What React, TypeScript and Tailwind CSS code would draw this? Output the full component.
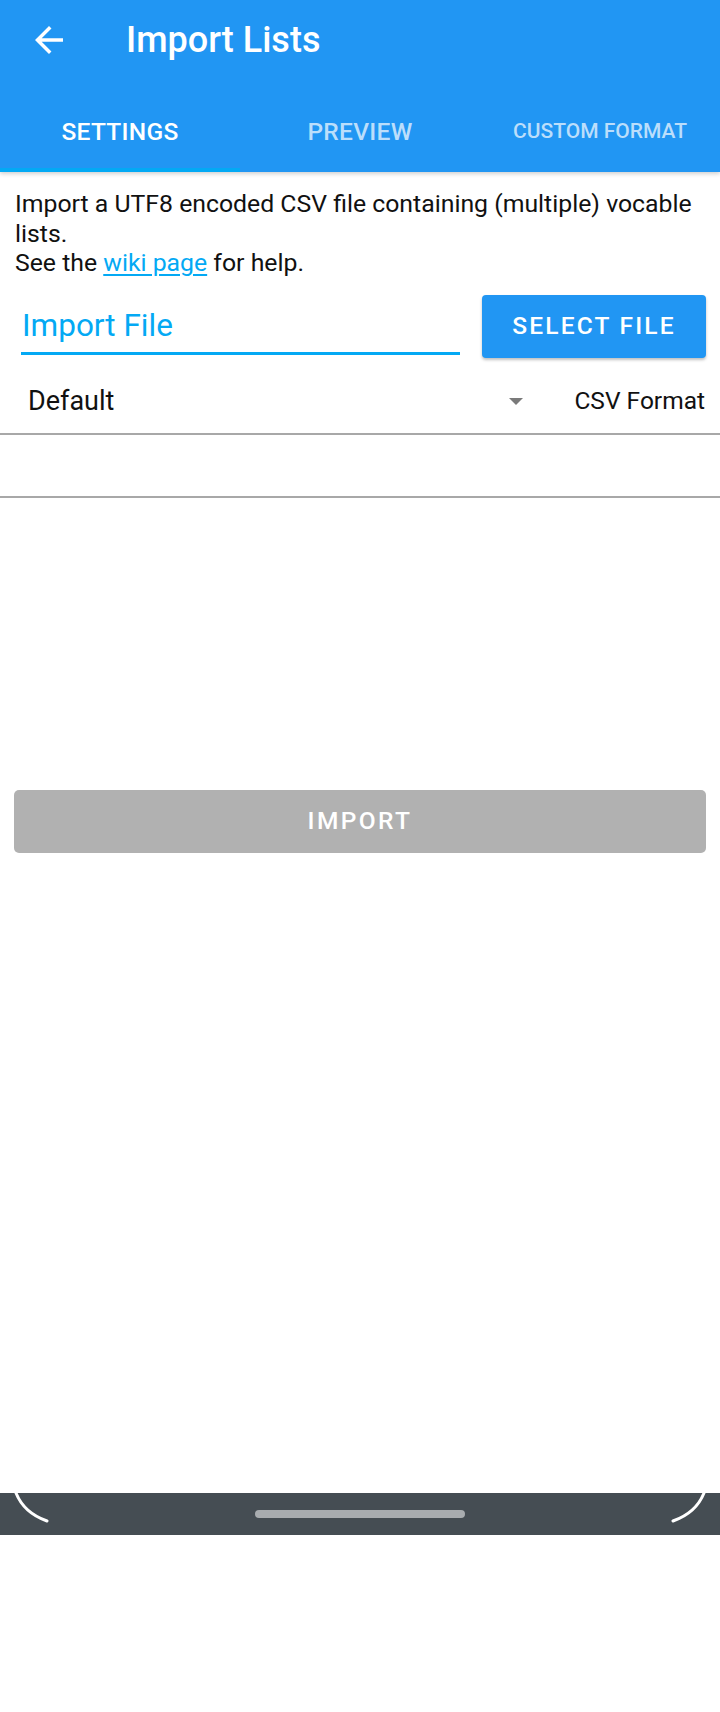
import { useState } from 'react'

const tabs = ['SETTINGS', 'PREVIEW', 'CUSTOM FORMAT']

function BackArrow() {
  return (
    <svg width="42" height="42" viewBox="0 0 24 24" fill="none">
      <path
        d="M20 11H7.83l5.59-5.59L12 4l-8 8 8 8 1.41-1.41L7.83 13H20v-2z"
        fill="#ffffff"
      />
    </svg>
  )
}

export default function App() {
  const [active, setActive] = useState(0)

  return (
    <div
      className="w-[720px] h-[1712px] bg-white flex flex-col"
      style={{ fontFamily: 'Roboto, "Noto Sans", sans-serif' }}
    >
      {/* Header */}
      <header className="bg-[#2196F3] shadow-[0_2px_4px_rgba(0,0,0,0.18)] relative z-10">
        <div className="h-[80px] flex items-center">
          <button className="ml-[28px] w-[42px] h-[42px] flex items-center justify-center" aria-label="Back">
            <BackArrow />
          </button>
          <h1 className="ml-[56px] text-[36px] font-medium text-white leading-none">Import Lists</h1>
        </div>
        <nav className="h-[92px] flex items-end">
          {tabs.map((t, i) => (
            <button
              key={t}
              onClick={() => setActive(i)}
              className={`w-[240px] h-[80px] flex items-center justify-center relative font-medium ${
                i === 2 ? 'text-[21px]' : 'text-[24.5px] tracking-[0.3px]'
              } ${i === active ? 'text-white' : 'text-[#BBDEFB]'}`}
            >
              {t}
              {i === active && <span className="absolute left-0 right-0 bottom-0 h-[4px] bg-[#03A9F4]" />}
            </button>
          ))}
        </nav>
      </header>

      {/* Settings */}
      <main className="flex flex-col">
        <p className="px-[15px] pt-[17px] text-[24.8px] leading-[29.5px] text-[#111111]">
          Import a UTF8 encoded CSV file containing (multiple) vocable lists.
          <br />
          See the{' '}
          <a href="#" className="text-[#03A9F4] underline underline-offset-[3px]">
            wiki page
          </a>{' '}
          for help.
        </p>

        <div className="flex items-start mt-[17px] pl-[21px] pr-[14px]">
          <div className="w-[439px] pt-[13px]">
            <div className="text-[31.5px] leading-[36px] text-[#03A9F4] pl-[1px]">Import File</div>
            <div className="mt-[8px] h-[3px] bg-[#03A9F4]" />
          </div>
          <button className="ml-auto w-[224px] h-[63px] rounded-[4px] bg-[#2196F3] text-white text-[24.5px] font-medium tracking-[2.2px] shadow-[0_2px_3px_rgba(0,0,0,0.25)]">
            SELECT FILE
          </button>
        </div>

        <div className="flex items-center h-[62px] mt-[13px] pl-[28px] pr-[15px] text-[24.5px] text-[#111111]">
          <span className="text-[27px]">Default</span>
          <span className="ml-auto mr-[51px] w-0 h-0 border-l-[7px] border-r-[7px] border-t-[7px] border-l-transparent border-r-transparent border-t-[#7a7a7a]" />
          <span>CSV Format</span>
        </div>
        <div className="h-[2px] bg-[#a8a8a8]" />
        <div className="h-[61px]" />
        <div className="h-[2px] bg-[#a8a8a8]" />

        <div className="px-[14px] mt-[292px]">
          <button
            disabled
            className="w-full h-[63px] rounded-[5px] bg-[#B1B1B1] text-white text-[24.5px] font-medium tracking-[2.4px]"
          >
            IMPORT
          </button>
        </div>
      </main>

      {/* Navigation bar */}
      <div className="mt-[640px] h-[42px] bg-[#454D53] relative flex items-center justify-center">
        <div className="w-[210px] h-[8px] rounded-full bg-[#A8ACAF]" />
        <svg className="absolute left-0 top-0" width="60" height="42" viewBox="0 0 60 42">
          <path d="M16 0 Q24 20 47 28" stroke="#ffffff" strokeWidth="3" fill="none" strokeLinecap="round" />
        </svg>
        <svg className="absolute right-0 top-0" width="60" height="42" viewBox="0 0 60 42">
          <path d="M44 0 Q36 20 13 28" stroke="#ffffff" strokeWidth="3" fill="none" strokeLinecap="round" />
        </svg>
      </div>
    </div>
  )
}
